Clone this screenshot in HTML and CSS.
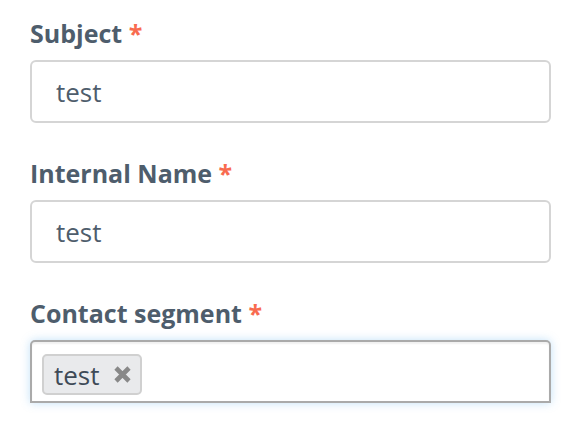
FILE: index.html
```html
<!DOCTYPE html>
<html lang="en">
<head>
    <meta charset="UTF-8">
    <title>Email details</title>
    <link rel="stylesheet" href="styles.css">
</head>
<body>
    <form class="details-form">
        <div class="form-group">
            <label class="control-label" for="subject">Subject <span class="required">*</span></label>
            <input type="text" id="subject" class="form-control" value="test">
        </div>
        <div class="form-group">
            <label class="control-label" for="internal-name">Internal Name <span class="required">*</span></label>
            <input type="text" id="internal-name" class="form-control" value="test">
        </div>
        <div class="form-group">
            <label class="control-label">Contact segment <span class="required">*</span></label>
            <div class="chosen-choices">
                <span class="search-choice">
                    <span class="choice-text">test</span>
                    <svg class="choice-close" width="19" height="19" viewBox="0 0 19 19">
                        <path d="M3 3 L16 16 M16 3 L3 16" stroke="#888" stroke-width="4.6" stroke-linecap="butt"/>
                    </svg>
                </span>
            </div>
        </div>
    </form>
</body>
</html>
```

FILE: styles.css
```css
body { margin: 0; padding: 0; background-color: #fff; font-family: "Open Sans", Arial, sans-serif; }
.details-form { width: 521px; padding-left: 30px; }
.form-group { padding-bottom: 17px; }
.control-label {
    display: block;
    padding-top: 15px;
    margin-bottom: 9px;
    font-size: 25px;
    line-height: 36px;
    font-weight: 700;
    color: #4e5d6c;
}
.required { color: #f86b4f; }
.form-control {
    display: block;
    box-sizing: border-box;
    width: 100%;
    height: 63px;
    margin: 0;
    padding: 0 24px;
    border: 2px solid #d5d5d5;
    border-radius: 6px;
    background-color: #fff;
    font-family: "Open Sans", Arial, sans-serif;
    font-size: 26px;
    color: #4e5d6c;
    outline: none;
}
.chosen-choices {
    display: flex;
    align-items: flex-start;
    box-sizing: border-box;
    width: 100%;
    height: 63px;
    padding: 12px 10px;
    border: 2px solid #aaa;
    border-radius: 5px 5px 0 0;
    background-color: #fff;
    box-shadow: 0 0 10px rgba(82, 168, 236, 0.35), inset 0 2px 2px rgba(0, 0, 0, 0.06);
}
.search-choice {
    display: flex;
    align-items: center;
    box-sizing: border-box;
    height: 41px;
    padding: 0 8px 0 10px;
    border: 2px solid #d0d0d0;
    border-radius: 5px;
    background-color: #e9eaec;
    font-size: 26px;
    color: #3e4a57;
}
.choice-close { margin-left: 13px; }
```
